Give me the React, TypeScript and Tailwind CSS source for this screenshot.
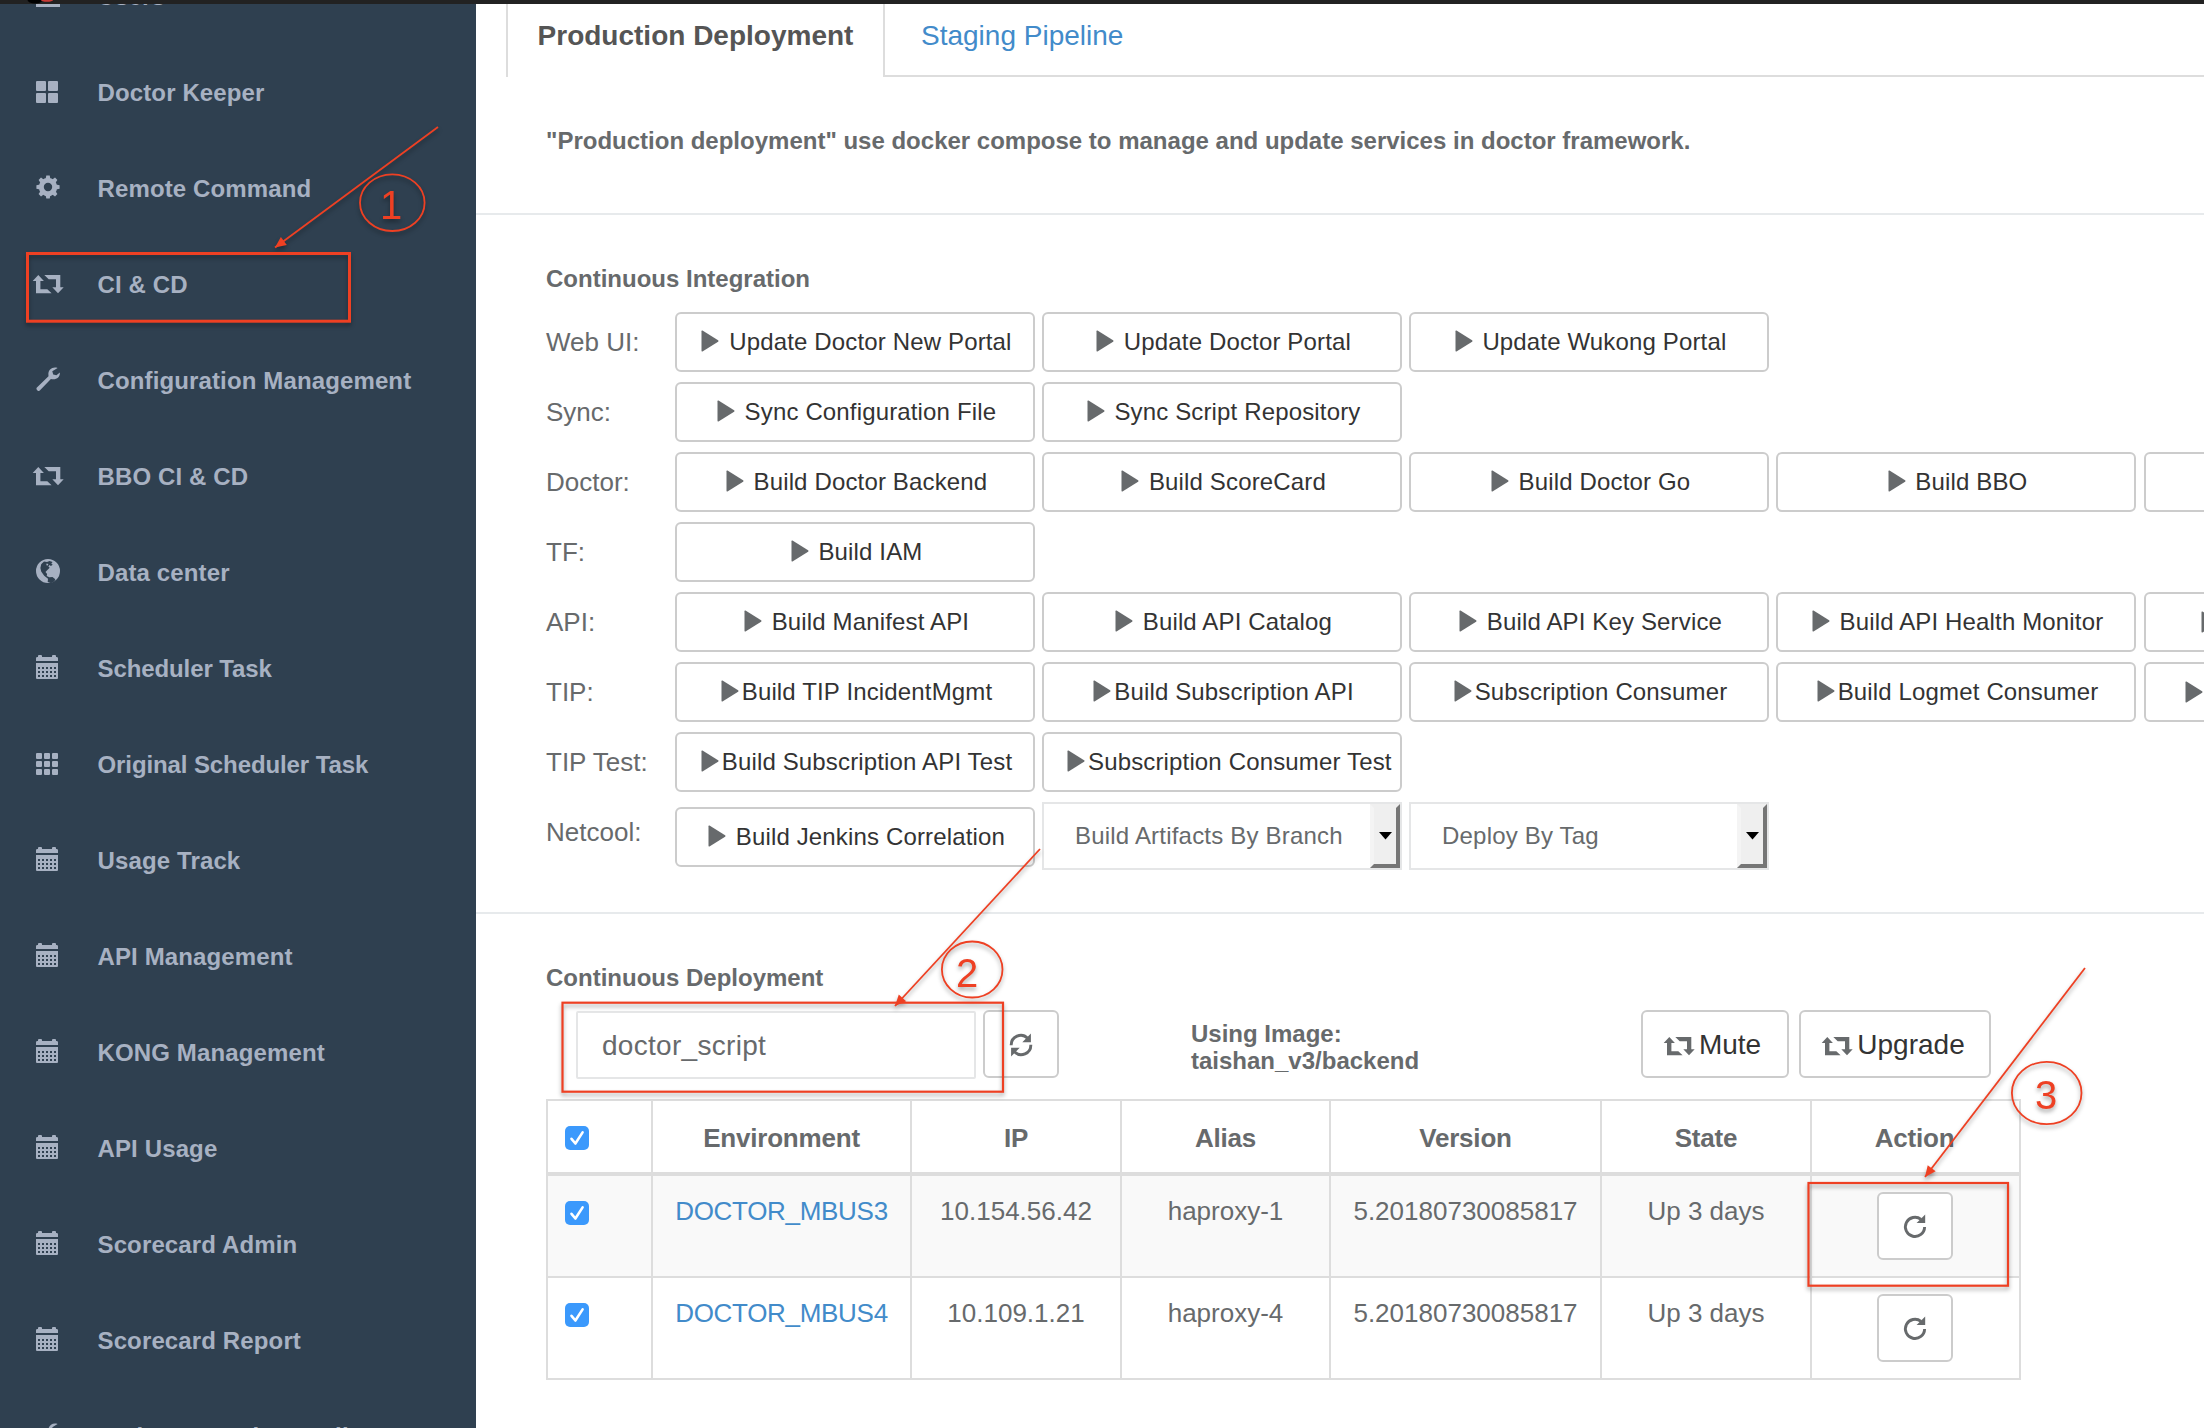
import type { ReactNode } from "react";

type IconName =
  | "user"
  | "thLarge"
  | "cog"
  | "retweet"
  | "wrench"
  | "globe"
  | "calendar"
  | "th"
  | "play"
  | "refresh"
  | "repeat";

const teeth = [0, 45, 90, 135, 180, 225, 270, 315];
const holesX = [2, 6, 10, 14, 18];
const holesY = [12, 16, 20];

const drawings: Record<IconName, ReactNode> = {
  user: <path d="M0 24v-3c0-3 6-4 8-6V8c0-5 8-5 8 0v7c2 2 8 3 8 6v3z" />,
  thLarge: (
    <>
      <rect x="0" y="2" width="10" height="10" rx="1" />
      <rect x="12" y="2" width="10" height="10" rx="1" />
      <rect x="0" y="14" width="10" height="10" rx="1" />
      <rect x="12" y="14" width="10" height="10" rx="1" />
    </>
  ),
  cog: (
    <>
      <circle cx="12" cy="12" r="6.7" fill="none" stroke="currentColor" strokeWidth="5" />
      {teeth.map((a) => (
        <path key={a} d="M9.6 4l.7-3.6h3.4l.7 3.6z" transform={`rotate(${a} 12 12)`} />
      ))}
    </>
  ),
  retweet: (
    <path d="M-3.3 10L2.3 4l5.6 6H4.4v8.3h6.9l4.3 4H0V10zM8.3 4h16v12.3h3.4L22 22.3l-5.7-6H20V8.3h-7.3z" />
  ),
  wrench: (
    <path d="M21.6.9C16.6-.8 12 2.6 12.4 7.6l.1 1.7L.9 20.4c-1.6 1.4 1.4 4.6 2.9 3.2L14.9 11.9c5 1.3 9.3-1.4 9-6.5L20.4 8.3l-3.2-.9-.9-3.1z" />
  ),
  globe: (
    <path
      fillRule="evenodd"
      d="M12 0a12 12 0 1 0 0 24a12 12 0 0 0 0-24zM5.2 5.2L8 2.6l3 .5 2.6-1 3 .8-1.3 1.6 1.4 1.2-1.8 1.3-1.5-1.1-1 1.7 1.3 1.2-2.8 2.7-1.4 1.6 1.6 1.8-.4 2.2 2.6 1.2 3.2-.2 2.8 2.1-1 2.3-4.4 1.6-2.2-1.2.3-3.2-3.8-3-3-4.3-.8-3.4zM10.6 4.6l1.7.3-.4 1.5-1.6-.2z"
    />
  ),
  calendar: (
    <path
      fillRule="evenodd"
      d={
        "M0 6V3.2Q0 2 1.4 2H2V1q0-1 1-1h2q1 0 1 1v1h10V1q0-1 1-1h2q1 0 1 1v1h.6Q22 2 22 3.2V6zM0 8h22v15q0 1-1 1H1q-1 0-1-1z" +
        holesY.map((y) => holesX.map((x) => `M${x} ${y}h2v2h-2z`).join("")).join("")
      }
    />
  ),
  th: (
    <>
      {[2, 10, 18].map((y) =>
        [0, 8, 16].map((x) => <rect key={`${x}-${y}`} x={x} y={y} width="6" height="6" rx="1" />),
      )}
    </>
  ),
  play: <path d="M3.5 2.2q0-1.2 1-.6l15.6 9.7q.9.7 0 1.4L4.5 22.4q-1 .6-1-.6z" />,
  refresh: (
    <>
      <path d="M2.2 12.3A9.6 9.6 0 0 1 18.6 5.2M21.8 11.7A9.6 9.6 0 0 1 5.4 18.8" fill="none" stroke="currentColor" strokeWidth="2.9" />
      <path d="M21.9.6v8.6h-8.6zM2.1 23.4v-8.6h8.6z" />
    </>
  ),
  repeat: (
    <>
      <path d="M21.6 13A9.6 9.6 0 1 1 18 5.4" fill="none" stroke="currentColor" strokeWidth="2.9" />
      <path d="M22.2.6v8.4h-8.6z" />
    </>
  ),
};

function Icon({ name, className = "" }: { name: IconName; className?: string }) {
  return (
    <svg viewBox="0 0 24 24" fill="currentColor" className={`size-6 shrink-0 overflow-visible ${className}`}>
      {drawings[name]}
    </svg>
  );
}

const menu: { icon: IconName; label: string; narrow?: boolean }[] = [
  { icon: "user", label: "Users" },
  { icon: "thLarge", label: "Doctor Keeper" },
  { icon: "cog", label: "Remote Command" },
  { icon: "retweet", label: "CI & CD" },
  { icon: "wrench", label: "Configuration Management" },
  { icon: "retweet", label: "BBO CI & CD" },
  { icon: "globe", label: "Data center" },
  { icon: "calendar", label: "Scheduler Task", narrow: true },
  { icon: "th", label: "Original Scheduler Task", narrow: true },
  { icon: "calendar", label: "Usage Track" },
  { icon: "calendar", label: "API Management" },
  { icon: "calendar", label: "KONG Management" },
  { icon: "calendar", label: "API Usage" },
  { icon: "calendar", label: "Scorecard Admin" },
  { icon: "calendar", label: "Scorecard Report" },
  { icon: "wrench", label: "Script Execution Audit" },
];

function Sidebar() {
  return (
    <nav className="w-[476px] shrink-0 overflow-hidden bg-[#2f4050] text-[#a7b1c2]">
      <ul className="-mt-[55px]">
        {menu.map((item) => (
          <li key={item.label} className="flex h-24 items-center pl-9 text-2xl font-bold whitespace-nowrap">
            <Icon name={item.icon} className="mr-[37.5px] mb-1" />
            <span className={item.narrow ? "tracking-[-0.1px]" : "tracking-[0.13px]"}>{item.label}</span>
          </li>
        ))}
      </ul>
    </nav>
  );
}

type Row = { label: string; tight?: boolean; jobs: string[]; more?: string };

const rows: Row[] = [
  { label: "Web UI:", jobs: ["Update Doctor New Portal", "Update Doctor Portal", "Update Wukong Portal"] },
  { label: "Sync:", jobs: ["Sync Configuration File", "Sync Script Repository"] },
  { label: "Doctor:", jobs: ["Build Doctor Backend", "Build ScoreCard", "Build Doctor Go", "Build BBO"], more: "pl-[80px]" },
  { label: "TF:", jobs: ["Build IAM"] },
  {
    label: "API:",
    jobs: ["Build Manifest API", "Build API Catalog", "Build API Key Service", "Build API Health Monitor"],
    more: "pl-[52px]",
  },
  {
    label: "TIP:",
    tight: true,
    jobs: ["Build TIP IncidentMgmt", "Build Subscription API", "Subscription Consumer", "Build Logmet Consumer"],
    more: "pl-[36px]",
  },
  { label: "TIP Test:", tight: true, jobs: ["Build Subscription API Test", "Subscription Consumer Test"] },
];

const jobButton =
  "block h-[60px] w-[360px] shrink-0 rounded-md border-2 border-[#ccc] bg-white px-5 text-center text-2xl leading-[56px] tracking-[0.15px] whitespace-nowrap text-[#333]";

function JobButton({ label, tight }: { label: string; tight?: boolean }) {
  return (
    <div className={jobButton}>
      <Icon name="play" className="inline-block align-[-3px] text-[#676a6c]" />
      {tight ? label : ` ${label}`}
    </div>
  );
}

function Select({ label }: { label: string }) {
  return (
    <div className="flex h-[68px] w-[360px] shrink-0 items-stretch border-2 border-[#e5e6e7] bg-white text-2xl tracking-[0.2px]">
      <span className="flex flex-1 items-center pl-[31px]">{label}</span>
      <span className="flex w-[30px] items-center justify-center border-4 border-t-[#efefef] border-r-[#767676] border-b-[#767676] border-l-[#f4f4f4] bg-[#efefef]">
        <svg viewBox="0 0 13 8" className="h-2 w-[13px] shrink-0">
          <path d="M0 0h13L6.5 7.5z" fill="#000" />
        </svg>
      </span>
    </div>
  );
}

function RowLabel({ children }: { children: ReactNode }) {
  return <div className="h-[60px] w-[129px] shrink-0 text-[26px] leading-[60px]">{children}</div>;
}

function Integration() {
  return (
    <section className="h-[699px] border-b-2 border-[#e7eaec] pt-[48px] pl-[70px]">
      <h3 className="text-2xl leading-[32px] font-bold">Continuous Integration</h3>
      <div className="mt-[17px] flex flex-col gap-2.5">
        {rows.map((row) => (
          <div key={row.label} className="flex">
            <RowLabel>{row.label}</RowLabel>
            <div className="flex gap-[7px]">
              {row.jobs.map((job) => (
                <JobButton key={job} label={job} tight={row.tight} />
              ))}
              {row.more && (
                <div className={`ml-px h-[60px] w-[360px] shrink-0 rounded-md border-2 border-[#ccc] pt-4 ${row.more}`}>
                  <Icon name="play" className="text-[#676a6c]" />
                </div>
              )}
            </div>
          </div>
        ))}
        <div className="flex">
          <RowLabel>Netcool:</RowLabel>
          <div className="flex gap-[7px]">
            <div className="pt-[5px]">
              <JobButton label="Build Jenkins Correlation" />
            </div>
            <Select label="Build Artifacts By Branch" />
            <Select label="Deploy By Tag" />
          </div>
        </div>
      </div>
    </section>
  );
}

function Checkbox() {
  return (
    <span className="flex size-6 items-center justify-center rounded-[5px] bg-[#3b99fc]">
      <svg viewBox="0 0 24 24" className="size-6" fill="none" stroke="#fff" strokeWidth="2.6" strokeLinecap="round" strokeLinejoin="round">
        <path d="M6.5 12.8l3.9 4.7L17.6 6.4" />
      </svg>
    </span>
  );
}

const largeButton = "flex h-[68px] shrink-0 items-center justify-center rounded-md border-2 border-[#ccc] bg-white text-[28px] text-[#333]";

const headers = ["Environment", "IP", "Alias", "Version", "State", "Action"];
const servers = [
  { env: "DOCTOR_MBUS3", cells: ["10.154.56.42", "haproxy-1", "5.20180730085817", "Up 3 days"] },
  { env: "DOCTOR_MBUS4", cells: ["10.109.1.21", "haproxy-4", "5.20180730085817", "Up 3 days"] },
];

const tableGrid = "grid grid-cols-[105px_259px_210px_209px_271px_210px_207px]";
const cell = "border-r-2 border-[#ddd] text-center";

function ServerTable() {
  return (
    <div className="w-[1475px] border-2 border-[#ddd] text-[26px]">
      <div className={`${tableGrid} h-[75px] border-b-4 border-[#ddd] font-bold tracking-[-0.2px]`}>
        <div className="border-r-2 border-[#ddd] pt-[25px] pl-[17px]">
          <Checkbox />
        </div>
        {headers.map((h) => (
          <div key={h} className="border-r-2 border-[#ddd] text-center leading-[74px] last:border-r-0 last:pr-0.5">
            {h}
          </div>
        ))}
      </div>
      {servers.map((server, i) => (
        <div key={server.env} className={i === 0 ? `${tableGrid} h-[102px] border-b-2 border-[#ddd] bg-[#f9f9f9]` : `${tableGrid} h-[100px]`}>
          <div className="border-r-2 border-[#ddd] pt-[25px] pl-[17px]">
            <Checkbox />
          </div>
          <div className={`${cell} leading-[70px] tracking-[-0.3px] text-[#428bca]`}>{server.env}</div>
          {server.cells.map((value) => (
            <div key={value} className={`${cell} leading-[70px]`}>
              {value}
            </div>
          ))}
          <div className="flex justify-center pt-4 pr-0.5">
            <div className={`${largeButton} w-[76px]`}>
              <Icon name="repeat" className="text-[#676a6c]" />
            </div>
          </div>
        </div>
      ))}
    </div>
  );
}

function Deployment() {
  return (
    <section className="pt-[48px] pl-[70px]">
      <h3 className="text-2xl leading-[32px] font-bold">Continuous Deployment</h3>
      <div className="mt-4 flex h-[68px]">
        <div className="mt-px ml-[30px] flex h-[68px] w-[400px] shrink-0 items-center rounded-xs border-2 border-[#e5e6e7] pt-0.5 pl-6 text-[28px] tracking-[0.3px]">
          doctor_script
        </div>
        <div className={`${largeButton} ml-[7px] w-[76px]`}>
          <Icon name="refresh" className="mt-0.5 text-[#676a6c]" />
        </div>
        <div className="w-[582px] shrink-0 pt-[10px] pl-[132px] text-2xl leading-[27px] font-bold">
          Using Image:
          <br />
          taishan_v3/backend
        </div>
        <div className={`${largeButton} w-[148px] gap-2 pt-0.5 pr-0.5`}>
          <Icon name="retweet" className="text-[#676a6c]" />
          Mute
        </div>
        <div className={`${largeButton} ml-2.5 w-[192px] gap-2 pt-0.5`}>
          <Icon name="retweet" className="text-[#676a6c]" />
          Upgrade
        </div>
      </div>
      <div className="mt-[21px]">
        <ServerTable />
      </div>
    </section>
  );
}

function Tabs() {
  return (
    <div className="flex h-[73px] pl-[30px]">
      <div className="w-[379px] shrink-0 border-x-2 border-[#ddd] text-center text-[28px] leading-[63px] font-bold text-[#555]">
        Production Deployment
      </div>
      <div className="flex-1 border-b-2 border-[#ddd] pl-9 text-[28px] leading-[63px] text-[#428bca]">Staging Pipeline</div>
    </div>
  );
}

const arrows = [
  { x1: 438, y1: 127, x2: 275, y2: 247.5 },
  { x1: 1040, y1: 849, x2: 895, y2: 1006 },
  { x1: 2085, y1: 968, x2: 1925, y2: 1177 },
];

const marks = [
  { cx: 392.3, cy: 202.7, rx: 32.3, ry: 28.3, tx: 391, ty: 218.5, n: "1" },
  { cx: 972.2, cy: 969.5, rx: 30.3, ry: 28, tx: 967, ty: 987, n: "2" },
  { cx: 2046.7, cy: 1093, rx: 34.8, ry: 31.2, tx: 2046, ty: 1108.5, n: "3" },
];

const boxes = [
  { x: 27.5, y: 253.5, width: 322, height: 67.7 },
  { x: 562.5, y: 1002.7, width: 440.5, height: 89 },
  { x: 1808.5, y: 1183, width: 199.5, height: 102.7 },
];

function Annotations() {
  return (
    <svg
      viewBox="0 0 2204 1428"
      className="pointer-events-none absolute inset-0 h-[1428px] w-[2204px] drop-shadow-[0_3px_2px_rgba(0,0,0,0.35)]"
      fill="none"
      stroke="#ee4023"
    >
      {boxes.map((b, i) => (
        <rect key={b.x} {...b} strokeWidth={i === 0 ? 3 : 2.2} />
      ))}
      {arrows.map((a) => {
        const angle = (Math.atan2(a.y2 - a.y1, a.x2 - a.x1) * 180) / Math.PI;
        return (
          <g key={a.x1}>
            <line {...a} strokeWidth="1.8" />
            <path d="M0 0l-11-5v10z" fill="#ee4023" stroke="none" transform={`translate(${a.x2} ${a.y2}) rotate(${angle})`} />
          </g>
        );
      })}
      {marks.map((m) => (
        <g key={m.n}>
          <ellipse cx={m.cx} cy={m.cy} rx={m.rx} ry={m.ry} strokeWidth="1.8" />
          <text x={m.tx} y={m.ty} fill="#ee4023" stroke="none" fontSize="40" textAnchor="middle">
            {m.n}
          </text>
        </g>
      ))}
    </svg>
  );
}

export default function App() {
  return (
    <div className="relative flex h-[1428px] w-[2204px] flex-col overflow-hidden bg-white font-['Liberation_Sans',Arial,sans-serif] text-[#676a6c]">
      <div className="h-1 shrink-0 bg-[#222]">
        <svg viewBox="0 0 60 4" className="ml-6 h-1 w-[60px]">
          <ellipse cx="11" cy="0" rx="7.5" ry="3.4" fill="#000" />
          <ellipse cx="23" cy="0" rx="6" ry="1.8" fill="#c93a36" />
        </svg>
      </div>
      <div className="flex min-h-0 flex-1">
        <Sidebar />
        <main className="min-w-0 flex-1 overflow-hidden">
          <Tabs />
          <p className="h-[138px] border-b-2 border-[#e7eaec] pt-[48px] pl-[70px] text-2xl leading-[32px] font-bold">
            "Production deployment" use docker compose to manage and update services in doctor framework.
          </p>
          <Integration />
          <Deployment />
        </main>
      </div>
      <Annotations />
    </div>
  );
}
